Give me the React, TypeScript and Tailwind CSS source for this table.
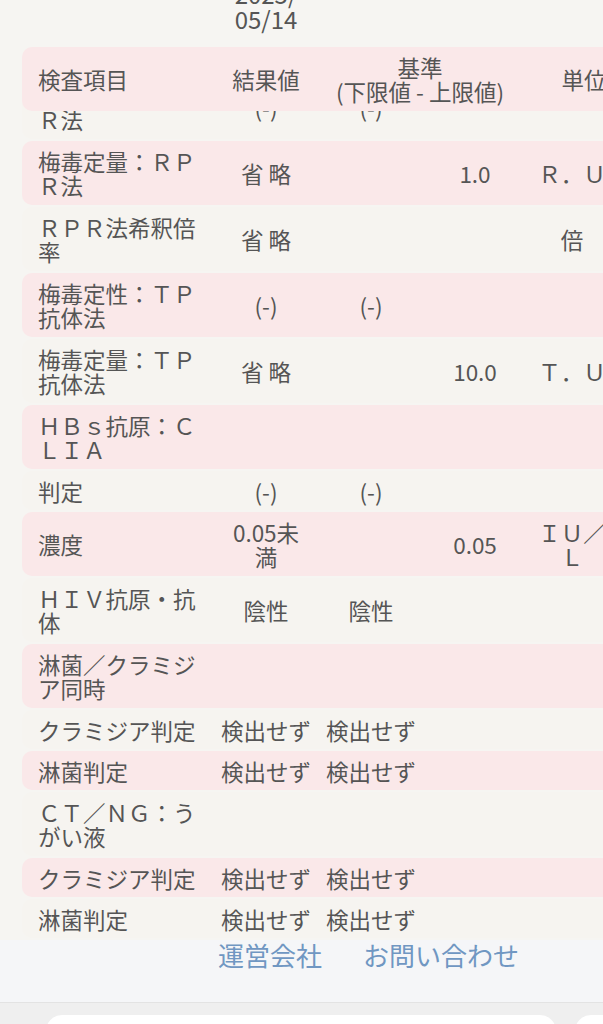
import React from "react";

type Row = {
  name: string;
  result?: React.ReactNode;
  lower?: string;
  upper?: string;
  unit?: string;
  single?: boolean;
};

const rows: Row[] = [
  { name: "梅毒定性：ＲＰＲ法", result: "(-)", lower: "(-)" },
  { name: "梅毒定量：ＲＰＲ法", result: "省 略", upper: "1.0", unit: "Ｒ．Ｕ" },
  { name: "ＲＰＲ法希釈倍率", result: "省 略", unit: "倍" },
  { name: "梅毒定性：ＴＰ抗体法", result: "(-)", lower: "(-)" },
  { name: "梅毒定量：ＴＰ抗体法", result: "省 略", upper: "10.0", unit: "Ｔ．Ｕ" },
  { name: "ＨＢｓ抗原：ＣＬＩＡ" },
  { name: "判定", result: "(-)", lower: "(-)", single: true },
  {
    name: "濃度",
    result: (
      <>
        0.05未
        <br />満
      </>
    ),
    upper: "0.05",
    unit: "ＩＵ／Ｌ",
  },
  { name: "ＨＩＶ抗原・抗体", result: "陰性", lower: "陰性" },
  { name: "淋菌／クラミジア同時" },
  { name: "クラミジア判定", result: "検出せず", lower: "検出せず", single: true },
  { name: "淋菌判定", result: "検出せず", lower: "検出せず", single: true },
  { name: "ＣＴ／ＮＧ：うがい液" },
  { name: "クラミジア判定", result: "検出せず", lower: "検出せず", single: true },
  { name: "淋菌判定", result: "検出せず", lower: "検出せず", single: true },
];

const cols = "grid w-[610px] shrink-0 grid-cols-[194px_100px_110px_98px_108px] items-center";

function ResultRow({ row, index }: { row: Row; index: number }) {
  const pink = index % 2 === 1;
  return (
    <div
      className={`${cols} mb-[2px] rounded-[10px] ${row.single ? "h-[39px]" : "h-[64px]"} ${
        pink ? "bg-[#fae8e9]" : "bg-[#f6f4f0]"
      } ${index === 0 ? "-mt-[36px]" : ""}`}
    >
      <div className="pl-4 pr-3">{row.name}</div>
      <div className="text-center">{row.result}</div>
      <div className="text-center">{row.lower}</div>
      <div className="text-center">{row.upper}</div>
      <div className="pl-1 pr-4 text-center">{row.unit}</div>
    </div>
  );
}

export default function App() {
  return (
    <div className="flex h-[1024px] w-[603px] flex-col overflow-hidden bg-[#f5f6f8] font-['Noto_Sans_CJK_JP',sans-serif] text-[22.5px] leading-[24px] text-[#555]">
      <div className="shrink-0 bg-[#f6f5f2]">
        <div className="-mt-[19px] mb-4 ml-[22px] grid w-[610px] grid-cols-[194px_100px_110px_98px_108px]">
          <div />
          <div className="text-center text-[24px] leading-[25px]">
            2025/
            <br />
            05/14
          </div>
        </div>

        <div className="ml-[22px]">
          <div className={`${cols} relative z-10 h-[64px] rounded-[10px] bg-[#fae8e9]`}>
            <div className="pl-4">検査項目</div>
            <div className="text-center">結果値</div>
            <div className="col-span-2 text-center">
              基準
              <br />
              (下限値 - 上限値)
            </div>
            <div className="pl-3 text-center">単位</div>
          </div>
          {rows.map((row, i) => (
            <ResultRow key={i} row={row} index={i} />
          ))}
        </div>
      </div>

      <div className="flex h-[62px] shrink-0 items-start gap-[41px] pl-[218px] text-[26px] leading-[30px] text-[#7097c2]">
        <span>運営会社</span>
        <span>お問い合わせ</span>
      </div>

      <div className="flex flex-1 gap-[19px] border-t border-[#e3e3e3] bg-[#efefef] pl-[46px] pt-3">
        <div className="h-[40px] w-[510px] shrink-0 rounded-2xl bg-white" />
        <div className="h-[40px] w-[60px] shrink-0 rounded-2xl bg-white" />
      </div>
    </div>
  );
}
